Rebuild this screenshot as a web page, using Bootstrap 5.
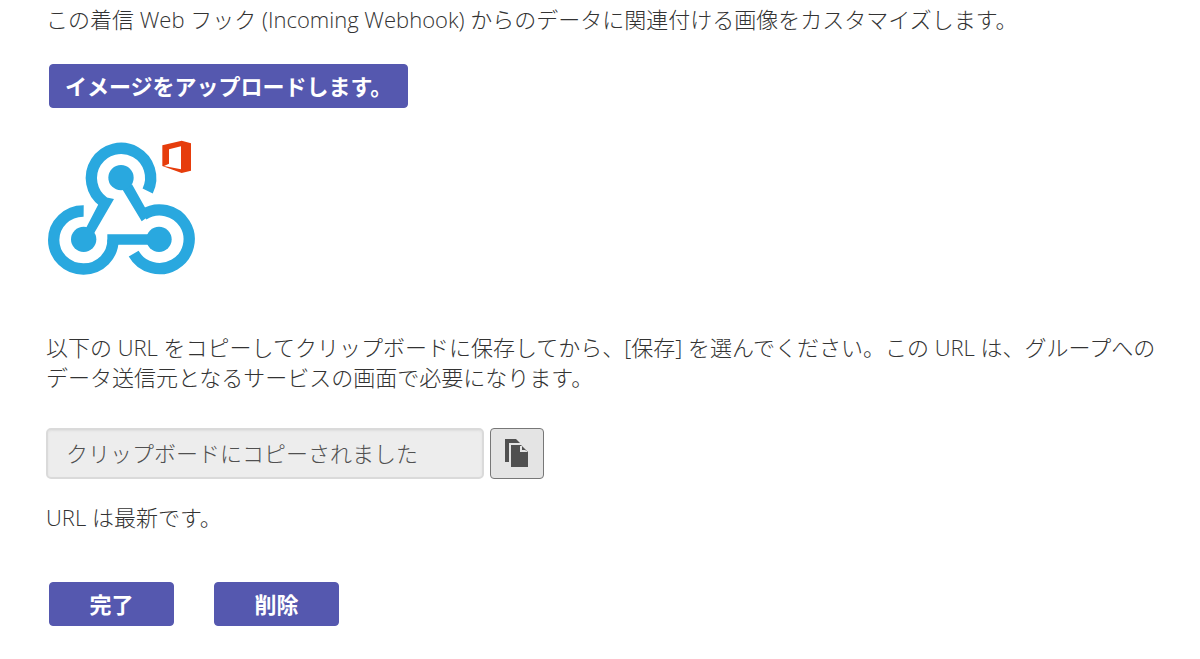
<!DOCTYPE html>
<html lang="ja">
<head>
<meta charset="utf-8">
<meta name="viewport" content="width=device-width, initial-scale=1">
<title>Incoming Webhook</title>
<link href="https://cdn.jsdelivr.net/npm/bootstrap@5.3.0/dist/css/bootstrap.min.css" rel="stylesheet">
<style>
  body { font-family: "Open Sans", "Noto Sans CJK JP", sans-serif; font-size: 22px; line-height: 30px; color: #333; }
  .page-body { padding: 4px 36px 32px 46px; font-weight: 300; }
  .btn-teams {
    --bs-btn-color: #fff; --bs-btn-bg: #5558af; --bs-btn-border-color: #5558af;
    --bs-btn-hover-color: #fff; --bs-btn-hover-bg: #464775; --bs-btn-hover-border-color: #464775;
    --bs-btn-font-size: 22px; --bs-btn-line-height: 30px; --bs-btn-font-weight: 700;
    --bs-btn-padding-y: 6px; --bs-btn-padding-x: 15px; --bs-btn-border-radius: 4px;
  }
  .btn-action { width: 125px; }
  .upload { padding-left: 3px; margin-top: 30px; }
  .actions { gap: 40px; margin-top: 50px; padding-left: 3px; }
  .hook-logo { width: 150px; height: 137px; margin-top: 30px; }
  .url-note { margin-top: 57px; }
  .url-row { gap: 6px; margin-top: 36px; }
  .url-box { width: 438px; height: 51px; }
  .url-box.form-control {
    background: #ededed; border: 2px solid #dadada; border-radius: 5px; color: #505050;
    font-size: 22px; font-weight: 300; padding: 0 18px 4px; box-shadow: inset 0 1px 2px #dfdfdf;
  }
  .btn-copy { width: 54px; height: 51px; background: #e4e4e4; border: 1px solid #777; border-radius: 4px; }
  .btn-copy:hover { background: #d8d8d8; border-color: #666; }
  .url-state { margin-top: 23px; }
</style>
</head>
<body>
<main class="page-body">
  <p class="mb-0">この着信 Web フック (Incoming Webhook) からのデータに関連付ける画像をカスタマイズします。</p>
  <div class="upload">
    <button type="button" class="btn btn-teams d-block">イメージをアップロードします。</button>
  </div>
  <svg class="hook-logo d-block" viewBox="18 24 450 411" role="img" aria-label="Webhook">
    <g fill="none" stroke="#29a8df" stroke-width="34">
      <path d="M323 183A89 89 0 1 0 191 216"/>
      <path d="M131 243A89 87 0 1 0 219 328"/>
      <path d="M281 371A89 88 0 1 0 310 254"/>
    </g>
    <g fill="#29a8df">
      <path d="M133 304L176 221L190 200L222 207L161 312ZM247 178L276 163L318 238L322 262L305 274ZM202 313H336V344H235L218 350L202 336Z"/>
      <circle cx="243" cy="143" r="38"/>
      <circle cx="131" cy="328" r="38"/>
      <circle cx="357" cy="328" r="38"/>
    </g>
    <path fill="#e63d0c" fill-rule="evenodd" d="M367 46L425 32L453 40V122L425 129L367 108ZM387 58L423 49V118L372 108L387 101Z"/>
  </svg>
  <p class="url-note mb-0">以下の URL をコピーしてクリップボードに保存してから、[保存] を選んでください。この URL は、グループへのデータ送信元となるサービスの画面で必要になります。</p>
  <div class="url-row d-flex">
    <input type="text" class="form-control url-box" aria-label="URL" value="クリップボードにコピーされました" readonly>
    <button type="button" class="btn btn-copy p-0 d-flex align-items-center justify-content-center" aria-label="コピー">
      <svg width="26" height="30" viewBox="0 0 26 30" aria-hidden="true">
        <path fill="#505050" d="M1 0H12L16 4H5V23H1Z"/>
        <path fill="#505050" d="M7 6H17L24 13V28H7Z"/>
        <path fill="#e4e4e4" d="M16 7V13H23V12L21 11H18V7Z"/>
      </svg>
    </button>
  </div>
  <p class="url-state mb-0">URL は最新です。</p>
  <div class="actions d-flex">
    <button type="button" class="btn btn-teams btn-action">完了</button>
    <button type="button" class="btn btn-teams btn-action">削除</button>
  </div>
</main>
<script src="https://cdn.jsdelivr.net/npm/bootstrap@5.3.0/dist/js/bootstrap.bundle.min.js"></script>
</body>
</html>
